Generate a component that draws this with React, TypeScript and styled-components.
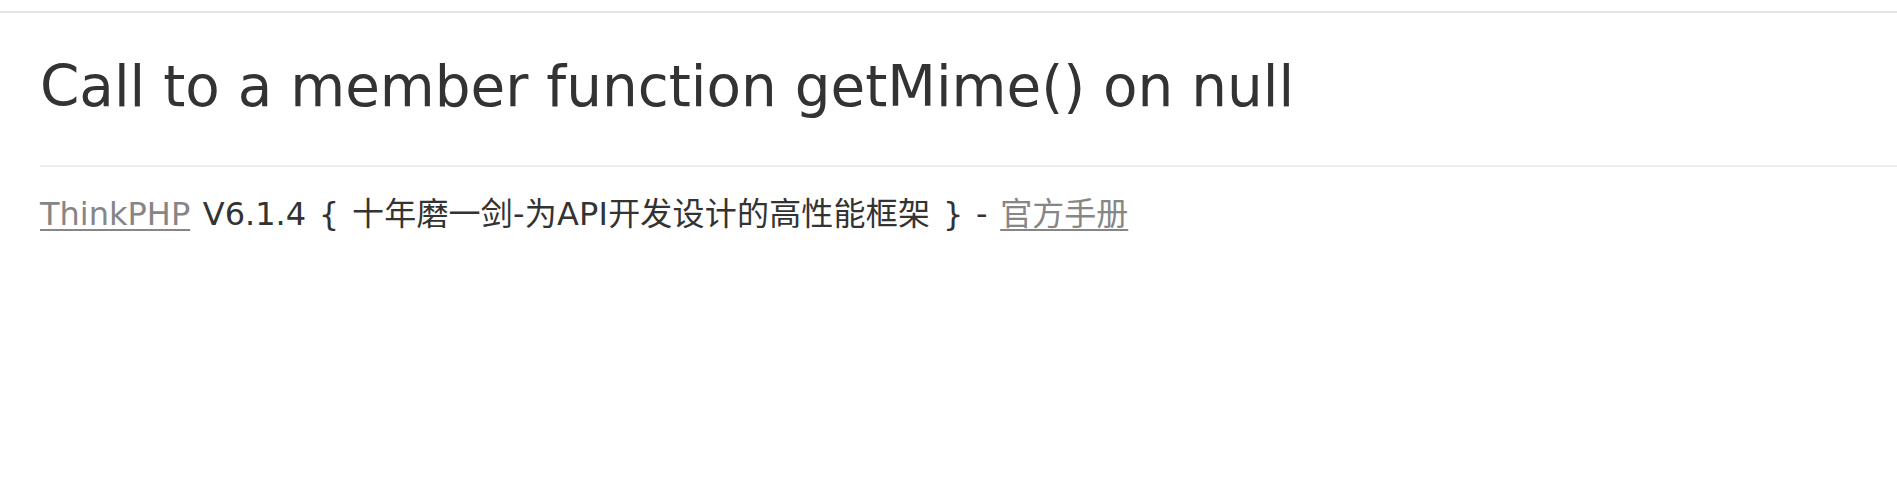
import React, { ReactElement } from 'react'
import styled, { createGlobalStyle } from 'styled-components'

const GlobalStyle = createGlobalStyle`
  html, body {
    margin: 0;
    padding: 0;
    background: #fff;
  }
  body {
    color: #333;
    font-family: 'DejaVu Sans', Verdana, 'Noto Sans CJK SC', sans-serif;
  }
`

const Echo = styled.div`
  height: 11px;
  border-bottom: 2px solid #e3e3e3;
`

const Page = styled.div`
  padding: 0 0 40px 40px;
`

const Title = styled.h1`
  margin: 42px 0 0;
  font-size: 56.4px;
  font-weight: 400;
  line-height: 64px;
  color: #333;
  white-space: nowrap;
`

const Copyright = styled.div`
  margin-top: 46px;
  padding: 27px 0 24px;
  border-top: 2px solid #eee;
  font-size: 32px;
  line-height: 40px;
  word-spacing: 2.4px;
  color: #333;
  white-space: nowrap;
  a {
    color: #868686;
    text-decoration: underline;
    text-decoration-thickness: 2px;
    text-underline-offset: 4px;
  }
`

const Slogan = styled.span`
  letter-spacing: 0.2px;
`

const App = (): ReactElement => {
  return (
    <>
      <GlobalStyle />
      <Echo />
      <Page>
        <Title>Call to a member function getMime() on null</Title>
        <Copyright>
          <a title="官方网站" href="#">ThinkPHP</a> <span>V6.1.4</span>{' '}
          <Slogan>{'{ 十年磨一剑-为API开发设计的高性能框架 }'}</Slogan>{' '}
          <span>
            - <a title="官方手册" href="#">官方手册</a>
          </span>
        </Copyright>
      </Page>
    </>
  )
}

export default App
